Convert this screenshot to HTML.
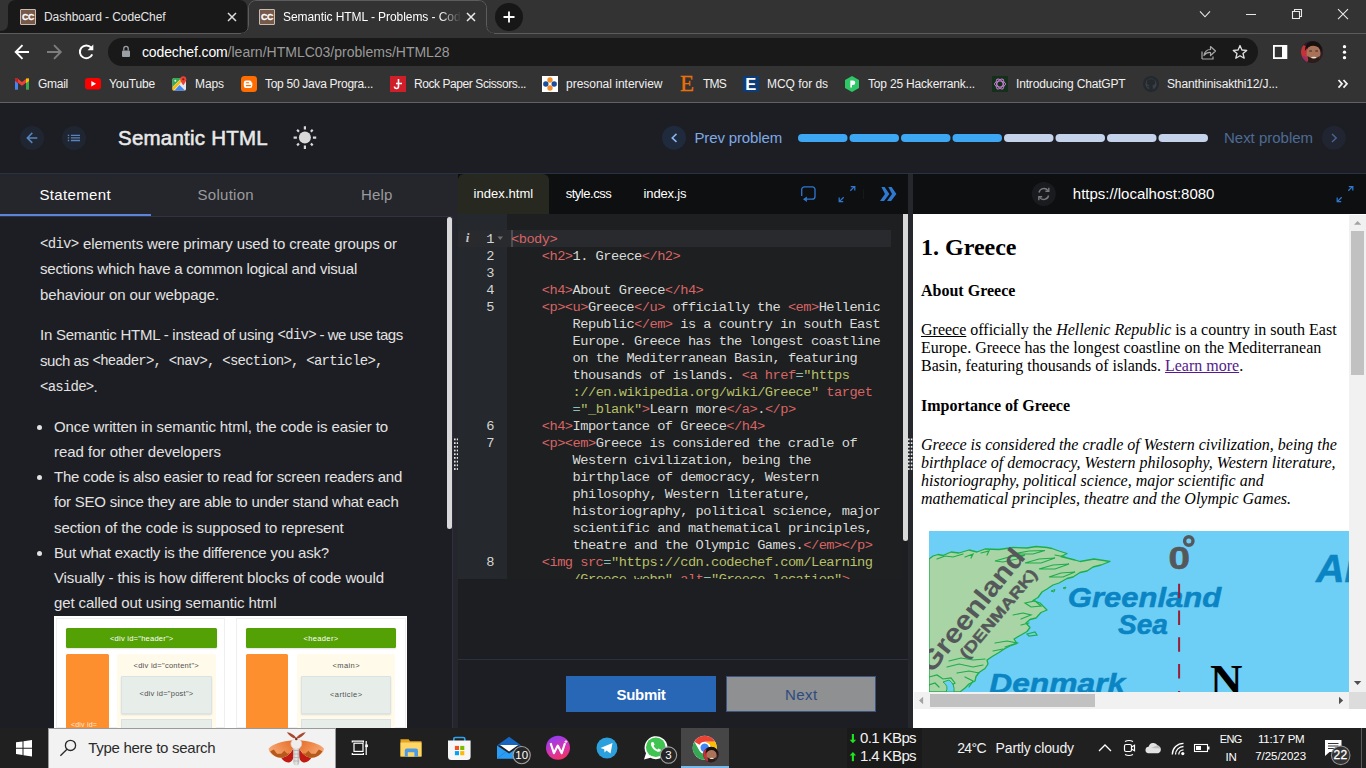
<!DOCTYPE html>
<html lang="en"><head><meta charset="utf-8"><title>Semantic HTML - Problems - CodeChef</title>
<style>
html,body{margin:0;padding:0;background:#1d1e23;overflow:hidden;}
#root{position:relative;width:1366px;height:768px;overflow:hidden;background:#1d1e23;}
#root>div,#root>svg{position:absolute;display:block;}
span.t{position:absolute;white-space:pre;display:block;}

section.code{position:absolute;overflow:hidden;font:13.7px/17px "Liberation Mono",monospace;letter-spacing:-0.524px;color:#d9dbd9;}
section.code i{position:absolute;font-style:normal;white-space:pre;}
section.code b{position:absolute;font-weight:400;right:409px;white-space:pre;color:#d4d6d4;}

section.pv{position:absolute;overflow:hidden;box-sizing:border-box;padding:0 8px;font:16px "Liberation Serif",serif;color:#000;background:#fff;}
section.pv h2{font-size:24px;margin:19.920px 0;font-weight:700;}
section.pv h4{font-size:16px;margin:21.280px 0;font-weight:700;}
section.pv p{margin:16px 0;}
section.pv a{color:#551a8b;text-decoration:underline;}

</style></head>
<body>
<div id="root">
<div style="left:0px;top:0px;width:1366px;height:103px;background:#333333;"></div>
<svg style="left:0;top:0" width="1366" height="36" viewBox="0 0 1366 36">
<path d="M0,33 L0,31 Q8,31 8,23 L8,8 Q8,0 16,0 L239,0 Q247,0 247,8 L247,25 Q247,33 255,33 Z" fill="#191919"/>
<path d="M0,33.5 L240,33.5 Q248.5,33.5 248.5,25 L248.5,9 Q248.5,0.5 257,0.5 L478,0.5 Q486.500,0.5 486.500,9 L486.500,25 Q486.500,33.5 495,33.5 L1366,33.5" fill="none" stroke="#5c5c5c" stroke-width="1"/>
<path d="M241,33 Q249,33 249,25 L249,9 Q249,1 257,1 L478,1 Q486,1 486,9 L486,25 Q486,33 494,33 L494,36 L241,36 Z" fill="#333333"/>
<circle cx="509" cy="17" r="14" fill="#171717"/>
<path d="M503.500,17 H514.500 M509,11.5 V22.5" stroke="#fff" stroke-width="1.800" fill="none"/>
<path d="M228,13 l8,8 m0,-8 l-8,8" stroke="#dedede" stroke-width="1.500" fill="none"/>
<path d="M467,13 l8,8 m0,-8 l-8,8" stroke="#ececec" stroke-width="1.500" fill="none"/>
<path d="M1200,11.400 l5,5.400 l5,-5.400" stroke="#e8e8e8" stroke-width="1.100" fill="none"/>
<path d="M1246,14.500 h10" stroke="#e8e8e8" stroke-width="1" fill="none"/>
<path d="M1292.500,11.500 h7 v7 h-7 z M1294.500,11.500 v-2 h7 v7 h-2" stroke="#e8e8e8" stroke-width="1.100" fill="none"/>
<path d="M1338,9.200 l10,10 m0,-10 l-10,10" stroke="#e8e8e8" stroke-width="1.100" fill="none"/>
</svg>
<svg style="left:20px;top:9px" width="16" height="16" viewBox="0 0 16 16"><rect x="0.5" y="0.5" width="15" height="15" rx="0.5" fill="#77594a" stroke="#cbbcb1" stroke-width="1"/><text x="8.100" y="11.300" font-family="Liberation Sans, sans-serif" font-weight="700" font-size="8.800" fill="#fff" stroke="#fff" stroke-width="0.300" text-anchor="middle" letter-spacing="-0.200">CC</text></svg>
<svg style="left:259px;top:9px" width="16" height="16" viewBox="0 0 16 16"><rect x="0.5" y="0.5" width="15" height="15" rx="0.5" fill="#77594a" stroke="#cbbcb1" stroke-width="1"/><text x="8.100" y="11.300" font-family="Liberation Sans, sans-serif" font-weight="700" font-size="8.800" fill="#fff" stroke="#fff" stroke-width="0.300" text-anchor="middle" letter-spacing="-0.200">CC</text></svg>
<span class="t" style="left:44px;top:9px;font:400 12px/17px 'Liberation Sans', sans-serif;color:#e4e4e4;letter-spacing:-0.095px;">Dashboard - CodeChef</span>
<span class="t" style="left:283px;top:9px;font:400 12px/17px 'Liberation Sans', sans-serif;color:#ffffff;letter-spacing:-0.070px;-webkit-mask-image:linear-gradient(90deg,#000 88%,transparent 100%);mask-image:linear-gradient(90deg,#000 88%,transparent 100%);">Semantic HTML - Problems - Cod</span>
<svg style="left:0;top:36px" width="1366" height="34" viewBox="0 36 1366 34">
<rect x="108" y="38" width="1150" height="28" rx="14" fill="#191919"/>
<path d="M29,52 H16.500 M22.500,45.200 L15.700,52 L22.500,58.800" stroke="#fff" stroke-width="1.900" fill="none"/>
<path d="M47,52 H60 M54,45.200 L60.800,52 L54,58.800" stroke="#7d7d7d" stroke-width="1.900" fill="none"/>
<path d="M91.200,47.700 A6.400,6.400 0 1 0 92.200,54.300" stroke="#fff" stroke-width="2" fill="none"/>
<path d="M93.300,44.500 V50.300 H87.500 Z" fill="#fff"/>
<rect x="122" y="50.500" width="8" height="6.500" rx="1" fill="#9aa0a6"/>
<path d="M123.800,50.500 v-2 a2.200,2.200 0 0 1 4.400,0 v2" stroke="#9aa0a6" stroke-width="1.300" fill="none"/>
<path d="M1202,59 V51.500 M1202,59 H1213 V56.500" stroke="#a8a8a8" stroke-width="1.200" fill="none"/>
<path d="M1204,55.500 Q1205,49.500 1210.500,49.500 V46.500 L1215.500,51 L1210.500,55.500 V52.500 Q1206.500,52.200 1204,55.500 Z" stroke="#a8a8a8" stroke-width="1.200" fill="none" stroke-linejoin="round"/>
<path d="M1240,45.500 L1241.900,50 L1246.700,50.400 L1243,53.500 L1244.200,58.200 L1240,55.700 L1235.800,58.200 L1237,53.500 L1233.300,50.400 L1238.100,50 Z" stroke="#e0e0e0" stroke-width="1.300" fill="none" stroke-linejoin="round"/>
<rect x="1273.900" y="45.900" width="12.500" height="12.200" fill="none" stroke="#fff" stroke-width="1.800"/>
<rect x="1282" y="46" width="4.500" height="12" fill="#fff"/>
<circle cx="1344.500" cy="46.700" r="1.650" fill="#fff"/><circle cx="1344.500" cy="52.200" r="1.650" fill="#fff"/><circle cx="1344.500" cy="57.700" r="1.650" fill="#fff"/>
<defs><clipPath id="avc"><circle cx="1312" cy="52" r="11"/></clipPath></defs>
<g clip-path="url(#avc)"><rect x="1300" y="40" width="24" height="24" fill="#2e1c24"/>
<ellipse cx="1303" cy="55" rx="6" ry="10" fill="#c4323a"/><ellipse cx="1302.500" cy="60.500" rx="5" ry="4.500" fill="#8e2c78" opacity="0.700"/>
<ellipse cx="1313.500" cy="53.500" rx="7" ry="8.700" fill="#a87358"/>
<path d="M1304.800,51 Q1305.500,41 1314,41 Q1322.500,42 1321.800,52 Q1319,45.800 1313.500,45.800 Q1308,45.800 1304.800,51 Z" fill="#17100f"/>
<path d="M1307.300,56 Q1313.500,60.500 1320,56 Q1319.200,63 1313.600,63.400 Q1308.300,63 1307.300,56 Z" fill="#2c1d18"/>
<ellipse cx="1313.800" cy="57.600" rx="2.700" ry="0.900" fill="#eadfd8"/>
<path d="M1309.300,51 h2.600 M1315.300,51 h2.600" stroke="#2a1a14" stroke-width="0.900"/></g>
</svg>
<span class="t" style="left:142px;top:42.2px;font:400 14px/20px 'Liberation Sans', sans-serif;color:#ffffff;letter-spacing:-0.131px;">codechef.com</span>
<span class="t" style="left:227.6px;top:42.2px;font:400 14px/20px 'Liberation Sans', sans-serif;color:#9a9a9a;letter-spacing:0.005px;">/learn/HTMLC03/problems/HTML28</span>
<div style="left:0px;top:102px;width:1366px;height:1px;background:#626262;"></div>
<span class="t" style="left:38px;top:76.1px;font:400 12px/17px 'Liberation Sans', sans-serif;color:#f0f0f0;letter-spacing:-0.269px;">Gmail</span>
<span class="t" style="left:109px;top:76.1px;font:400 12px/17px 'Liberation Sans', sans-serif;color:#f0f0f0;letter-spacing:-0.165px;">YouTube</span>
<span class="t" style="left:195px;top:76.1px;font:400 12px/17px 'Liberation Sans', sans-serif;color:#f0f0f0;letter-spacing:-0.086px;">Maps</span>
<span class="t" style="left:265px;top:76.1px;font:400 12px/17px 'Liberation Sans', sans-serif;color:#f0f0f0;letter-spacing:-0.289px;">Top 50 Java Progra...</span>
<span class="t" style="left:414px;top:76.1px;font:400 12px/17px 'Liberation Sans', sans-serif;color:#f0f0f0;letter-spacing:-0.426px;">Rock Paper Scissors...</span>
<span class="t" style="left:566px;top:76.1px;font:400 12px/17px 'Liberation Sans', sans-serif;color:#f0f0f0;letter-spacing:-0.012px;">presonal interview</span>
<span class="t" style="left:703px;top:76.1px;font:400 12px/17px 'Liberation Sans', sans-serif;color:#f0f0f0;letter-spacing:-0.781px;">TMS</span>
<span class="t" style="left:767px;top:76.1px;font:400 12px/17px 'Liberation Sans', sans-serif;color:#f0f0f0;letter-spacing:-0.034px;">MCQ for ds</span>
<span class="t" style="left:868px;top:76.1px;font:400 12px/17px 'Liberation Sans', sans-serif;color:#f0f0f0;letter-spacing:-0.186px;">Top 25 Hackerrank...</span>
<span class="t" style="left:1016px;top:76.1px;font:400 12px/17px 'Liberation Sans', sans-serif;color:#f0f0f0;letter-spacing:-0.170px;">Introducing ChatGPT</span>
<span class="t" style="left:1167px;top:76.1px;font:400 12px/17px 'Liberation Sans', sans-serif;color:#f0f0f0;letter-spacing:-0.140px;">Shanthinisakthi12/J...</span>
<svg style="left:0;top:72px" width="1366" height="24" viewBox="0 72 1366 24">
<g><path d="M15,78.500 h2.500 l4.500,3.600 l4.500,-3.600 h2.500 v11 h-3 v-6.800 l-4,3.100 l-4,-3.100 v6.800 h-3 z" fill="#ea4335"/>
<path d="M15,79.500 v10 h3 v-7.600 z" fill="#4285f4"/><path d="M29,79.500 v10 h-3 v-7.600 z" fill="#34a853"/><path d="M26,78.500 h3 v2.500 l-3,2.200 z" fill="#fbbc04"/><path d="M18,78.500 h-3 v2.500 l3,2.200 z" fill="#c5221f"/></g>
<rect x="85" y="78" width="16" height="11.500" rx="3" fill="#ff0000"/><path d="M91.300,81 v5.500 l4.800,-2.750 z" fill="#fff"/>
<g><rect x="172.500" y="78" width="13.500" height="12.500" rx="1.500" fill="#e4e6ea"/>
<path d="M172.500,79.500 a1.500,1.500 0 0 1 1.500,-1.500 h7.500 l-9,9 z" fill="#34a853"/>
<path d="M172.500,90 v-2.500 l9.500,-9.500 h3 l-11.500,12.500 z" fill="#fbbc04"/>
<path d="M174.500,90.500 l5,-5.500 l5.500,5.500 z" fill="#4285f4"/>
<circle cx="175.300" cy="80.800" r="1" fill="#e9f5ec"/>
<path d="M183.300,76.300 a3,3 0 0 1 3,3 c0,2.300 -3,6 -3,6 c0,0 -3,-3.700 -3,-6 a3,3 0 0 1 3,-3 z" fill="#ea4335"/><circle cx="183.300" cy="79.300" r="1.100" fill="#8c1a14"/></g>
<rect x="241" y="76" width="16" height="16" rx="3.500" fill="#ff6d00"/>
<path d="M246,80.500 h3.500 a2.200,2.200 0 0 1 2.200,2.200 h0.600 v3 a2.200,2.200 0 0 1 -2.200,2.200 h-4.100 a2.200,2.200 0 0 1 -2.200,-2.200 v-3 a2.200,2.200 0 0 1 2.200,-2.200 z" fill="#fff"/><path d="M246.300,82.800 h2.400 M246.300,85.600 h4.200" stroke="#ff6d00" stroke-width="1.100" stroke-linecap="round"/>
<rect x="390" y="76" width="16" height="16" fill="#d11f2a"/><path d="M398.500,79 v7.500 a2,2 0 0 1 -4,0 M396,83.500 h6" stroke="#fff" stroke-width="1.600" fill="none"/>
<rect x="542" y="76" width="16" height="16" fill="#fff"/><circle cx="550" cy="80" r="2.700" fill="#f28c28"/><circle cx="550" cy="88" r="2.700" fill="#f28c28"/><circle cx="545.800" cy="84" r="2.700" fill="#1b4f9c"/><circle cx="554.200" cy="84" r="2.700" fill="#1b4f9c"/>
<rect x="743" y="76" width="16" height="16" fill="#0b3d7a"/>
<path d="M845,80 l7,-4 l7,4 v8 l-7,4 l-7,-4 z" fill="#2ec866"/><path d="M850.300,80.500 h2.700 a2.300,2.300 0 0 1 0,4.600 h-1 v2.400 h-1.700 z" fill="#fff"/>
<rect x="992" y="76" width="16" height="16" fill="#14301a"/><g stroke="#c47fd0" stroke-width="1" fill="none"><ellipse cx="1000" cy="84" rx="5.500" ry="3"/><ellipse cx="1000" cy="84" rx="5.500" ry="3" transform="rotate(60 1000 84)"/><ellipse cx="1000" cy="84" rx="5.500" ry="3" transform="rotate(120 1000 84)"/></g>
<circle cx="1151" cy="84" r="8" fill="#24292e"/><path d="M1151,78.500 a5.500,5.500 0 0 0 -1.800,10.700 v-2 c-1.600,0.300 -2,-0.800 -2.600,-1.500 c1,0 1.400,0.900 2.600,0.600 l0.500,-0.900 c-1.800,-0.300 -2.900,-1.200 -2.900,-3 c0,-0.800 0.300,-1.400 0.700,-1.900 c-0.100,-0.500 -0.100,-1.200 0.100,-1.600 c0.700,0 1.300,0.300 1.800,0.700 c1,-0.300 2.200,-0.300 3.200,0 c0.500,-0.400 1.100,-0.700 1.800,-0.700 c0.200,0.400 0.200,1.100 0.100,1.600 c0.400,0.500 0.700,1.100 0.700,1.900 c0,1.800 -1.100,2.700 -2.900,3 c0.400,0.400 0.500,0.900 0.500,1.500 v2.300 a5.500,5.500 0 0 0 -1.800,-10.700 z" fill="#3a4047"/>
<path d="M1338.500,80 l3.500,3.800 l-3.500,3.800 M1343.500,80 l3.500,3.800 l-3.500,3.800" stroke="#f4f4f4" stroke-width="1.700" fill="none"/>
</svg>
<span class="t" style="left:680px;top:68.3px;font:400 23px/32px 'Liberation Serif', serif;color:#e8710a;-webkit-text-stroke:0.3px #e8710a;">E</span>
<span class="t" style="left:745.3px;top:72.9px;font:700 16.5px/23px 'Liberation Sans', sans-serif;color:#ffffff;">E</span>
<div style="left:0px;top:103px;width:1366px;height:625px;background:#1d1e23;"></div>
<div style="left:0px;top:173px;width:1366px;height:1px;background:#2a3142;"></div>
<svg style="left:0;top:110px" width="340" height="56" viewBox="0 110 340 56">
<circle cx="32.100" cy="137.900" r="12" fill="#1f2631"/><path d="M37.300,137.900 H27.400 M32.300,132.900 L27.300,137.900 L32.300,142.900" stroke="#5884bd" stroke-width="1.500" fill="none"/>
<circle cx="74" cy="137.900" r="12" fill="#1f2631"/>
<g stroke="#5884bd" stroke-width="1.300"><path d="M70.900,135.400 h9.100 M70.900,137.950 h9.100 M70.900,140.500 h9.100"/><path d="M67.800,135.400 h1.400 M67.800,137.950 h1.400 M67.800,140.500 h1.400"/></g>
<circle cx="304.9" cy="137.6" r="6" fill="#d9d9d9"/>
<path d="M312.90,137.60 L316.20,137.60 M310.84,143.54 L312.68,145.38 M304.90,145.60 L304.90,148.90 M298.96,143.54 L297.12,145.38 M296.90,137.60 L293.60,137.60 M298.96,131.66 L297.12,129.82 M304.90,129.60 L304.90,126.30 M310.84,131.66 L312.68,129.82" stroke="#d9d9d9" stroke-width="2.200" fill="none"/>
</svg>
<span class="t" style="left:118px;top:123px;font:400 20.5px/29px 'Liberation Sans', sans-serif;color:#e9e9e9;letter-spacing:0.233px;-webkit-text-stroke:0.55px #e9e9e9;">Semantic HTML</span>
<svg style="left:650px;top:120px" width="716" height="36" viewBox="650 120 716 36">
<circle cx="674" cy="137.800" r="12" fill="#1f2a3d"/><path d="M676.500,133.900 l-4.300,4 l4.300,4" stroke="#8db6ee" stroke-width="1.500" fill="none"/>
<circle cx="1333.900" cy="137.800" r="12" fill="#202531"/><path d="M1332,134.100 l4.200,3.950 l-4.200,3.950" stroke="#4a6690" stroke-width="1.400" fill="none"/>
<g fill="#3da7f3"><rect x="798" y="134" width="49.500" height="8" rx="4"/><rect x="849.500" y="134" width="49.500" height="8" rx="4"/><rect x="901" y="134" width="49.500" height="8" rx="4"/><rect x="952.500" y="134" width="49.500" height="8" rx="4"/></g>
<g fill="#c4d2ea"><rect x="1004" y="134" width="49.500" height="8" rx="4"/><rect x="1055.500" y="134" width="49.500" height="8" rx="4"/><rect x="1107" y="134" width="49.500" height="8" rx="4"/><rect x="1158.500" y="134" width="49.500" height="8" rx="4"/></g>
</svg>
<span class="t" style="left:694.5px;top:127.1px;font:400 15px/21px 'Liberation Sans', sans-serif;color:#7eaae8;letter-spacing:-0.142px;">Prev problem</span>
<span class="t" style="left:1224px;top:127px;font:400 15px/21px 'Liberation Sans', sans-serif;color:#4d6b95;letter-spacing:-0.017px;">Next problem</span>
<div style="left:0px;top:174px;width:458px;height:42px;background:#25262b;"></div>
<div style="left:0px;top:216px;width:452px;height:1px;background:#2f3342;"></div>
<div style="left:0px;top:214px;width:151px;height:2px;background:#5b84dc;"></div>
<span class="t" style="left:39.5px;top:184px;font:400 15px/21px 'Liberation Sans', sans-serif;color:#ffffff;letter-spacing:0.347px;">Statement</span>
<span class="t" style="left:197.5px;top:184px;font:400 15px/21px 'Liberation Sans', sans-serif;color:#9a9b9e;letter-spacing:0.285px;">Solution</span>
<span class="t" style="left:361px;top:184px;font:400 15px/21px 'Liberation Sans', sans-serif;color:#9a9b9e;letter-spacing:0.160px;">Help</span>
<div style="left:452px;top:216px;width:6px;height:512px;background:#25262b;"></div>
<div style="left:452px;top:217px;width:1px;height:511px;background:#2d3040;"></div>
<div style="left:447px;top:217px;width:5px;height:311.5px;background:#d9d9d9;border-radius:3px;"></div>
<svg style="left:453.5px;top:438px" width="5" height="34" viewBox="0 0 5 34"><rect x="0" y="0.5" width="1.600" height="1.800" fill="#e8e8e8"/><rect x="2.800" y="0.5" width="1.600" height="1.800" fill="#e8e8e8"/><rect x="0" y="4.2" width="1.600" height="1.800" fill="#e8e8e8"/><rect x="2.800" y="4.2" width="1.600" height="1.800" fill="#e8e8e8"/><rect x="0" y="7.9" width="1.600" height="1.800" fill="#e8e8e8"/><rect x="2.800" y="7.9" width="1.600" height="1.800" fill="#e8e8e8"/><rect x="0" y="11.6" width="1.600" height="1.800" fill="#e8e8e8"/><rect x="2.800" y="11.6" width="1.600" height="1.800" fill="#e8e8e8"/><rect x="0" y="15.3" width="1.600" height="1.800" fill="#e8e8e8"/><rect x="2.800" y="15.3" width="1.600" height="1.800" fill="#e8e8e8"/><rect x="0" y="19.0" width="1.600" height="1.800" fill="#e8e8e8"/><rect x="2.800" y="19.0" width="1.600" height="1.800" fill="#e8e8e8"/><rect x="0" y="22.7" width="1.600" height="1.800" fill="#e8e8e8"/><rect x="2.800" y="22.7" width="1.600" height="1.800" fill="#e8e8e8"/><rect x="0" y="26.4" width="1.600" height="1.800" fill="#e8e8e8"/><rect x="2.800" y="26.4" width="1.600" height="1.800" fill="#e8e8e8"/><rect x="0" y="30.1" width="1.600" height="1.800" fill="#e8e8e8"/><rect x="2.800" y="30.1" width="1.600" height="1.800" fill="#e8e8e8"/></svg>
<span class="t" style="left:40px;top:234.3px;font:400 14px/20px 'Liberation Mono', monospace;color:#e2e2e2;letter-spacing:-0.703px;">&lt;div&gt;</span>
<span class="t" style="left:83px;top:232.6px;font:400 15px/21px 'Liberation Sans', sans-serif;color:#e2e2e2;letter-spacing:-0.102px;">elements were primary used to create groups or</span>
<span class="t" style="left:40px;top:258.1px;font:400 15px/21px 'Liberation Sans', sans-serif;color:#e2e2e2;letter-spacing:-0.209px;">sections which have a common logical and visual</span>
<span class="t" style="left:40px;top:283.6px;font:400 15px/21px 'Liberation Sans', sans-serif;color:#e2e2e2;letter-spacing:-0.113px;">behaviour on our webpage.</span>
<span class="t" style="left:40px;top:323.6px;font:400 15px/21px 'Liberation Sans', sans-serif;color:#e2e2e2;letter-spacing:-0.245px;">In Semantic HTML - instead of using</span>
<span class="t" style="left:277.5px;top:325.3px;font:400 14px/20px 'Liberation Mono', monospace;color:#e2e2e2;letter-spacing:-0.703px;">&lt;div&gt;</span>
<span class="t" style="left:319.5px;top:323.6px;font:400 15px/21px 'Liberation Sans', sans-serif;color:#e2e2e2;letter-spacing:-0.463px;">- we use tags</span>
<span class="t" style="left:40px;top:349.6px;font:400 15px/21px 'Liberation Sans', sans-serif;color:#e2e2e2;letter-spacing:-0.458px;">such as</span>
<span class="t" style="left:92.5px;top:351.3px;font:400 14px/20px 'Liberation Mono', monospace;color:#e2e2e2;letter-spacing:-0.765px;">&lt;header&gt;, &lt;nav&gt;, &lt;section&gt;, &lt;article&gt;,</span>
<span class="t" style="left:40px;top:377.3px;font:400 14px/20px 'Liberation Mono', monospace;color:#e2e2e2;letter-spacing:-0.759px;">&lt;aside&gt;</span>
<span class="t" style="left:93.5px;top:375.6px;font:400 15px/21px 'Liberation Sans', sans-serif;color:#e2e2e2;letter-spacing:-0.672px;">.</span>
<div style="left:37px;top:424.5px;width:5px;height:5px;background:#e2e2e2;border-radius:50%;"></div>
<div style="left:37px;top:475.0px;width:5px;height:5px;background:#e2e2e2;border-radius:50%;"></div>
<div style="left:37px;top:550.5px;width:5px;height:5px;background:#e2e2e2;border-radius:50%;"></div>
<span class="t" style="left:54px;top:415.6px;font:400 15px/21px 'Liberation Sans', sans-serif;color:#e2e2e2;letter-spacing:-0.102px;">Once written in semantic html, the code is easier to</span>
<span class="t" style="left:54px;top:440.6px;font:400 15px/21px 'Liberation Sans', sans-serif;color:#e2e2e2;letter-spacing:-0.024px;">read for other developers</span>
<span class="t" style="left:54px;top:466.1px;font:400 15px/21px 'Liberation Sans', sans-serif;color:#e2e2e2;letter-spacing:-0.226px;">The code is also easier to read for screen readers and</span>
<span class="t" style="left:54px;top:491.4px;font:400 15px/21px 'Liberation Sans', sans-serif;color:#e2e2e2;letter-spacing:-0.222px;">for SEO since they are able to under stand what each</span>
<span class="t" style="left:54px;top:516.6px;font:400 15px/21px 'Liberation Sans', sans-serif;color:#e2e2e2;letter-spacing:-0.108px;">section of the code is supposed to represent</span>
<span class="t" style="left:54px;top:541.6px;font:400 15px/21px 'Liberation Sans', sans-serif;color:#e2e2e2;letter-spacing:-0.191px;">But what exactly is the difference you ask?</span>
<span class="t" style="left:54px;top:566.6px;font:400 15px/21px 'Liberation Sans', sans-serif;color:#e2e2e2;letter-spacing:-0.119px;">Visually - this is how different blocks of code would</span>
<span class="t" style="left:54px;top:591.6px;font:400 15px/21px 'Liberation Sans', sans-serif;color:#e2e2e2;letter-spacing:-0.102px;">get called out using semantic html</span>
<div style="left:54px;top:616px;width:353px;height:112px;background:#ffffff;"></div>
<div style="left:56px;top:618px;width:169px;height:110px;background:#ffffff;border:1px solid #efefef;box-sizing:border-box;"></div>
<div style="left:236px;top:618px;width:170px;height:110px;background:#ffffff;border:1px solid #efefef;box-sizing:border-box;"></div>
<div style="left:66px;top:628px;width:150.5px;height:19.5px;background:#54a106;border-radius:1.5px;box-shadow:0 1px 2px rgba(0,0,0,.12);"></div>
<div style="left:66px;top:654px;width:42.5px;height:74px;background:#fd8f2e;border-radius:1.5px 1.5px 0 0;"></div>
<div style="left:117px;top:654px;width:98.5px;height:74px;background:#fffaea;border-radius:1.5px 1.5px 0 0;"></div>
<div style="left:121px;top:676px;width:90.5px;height:37.5px;background:#e7eeea;border-radius:1px;border:1px solid #d9e2e4;box-sizing:border-box;box-shadow:0 1px 2px rgba(0,0,0,.12);"></div>
<div style="left:121px;top:719px;width:90.5px;height:9px;background:#e7eeea;border-radius:1px 1px 0 0;border:1px solid #d9e2e4;border-bottom:none;box-sizing:border-box;"></div>
<div style="left:245.5px;top:628px;width:150.5px;height:19.5px;background:#54a106;border-radius:1.5px;box-shadow:0 1px 2px rgba(0,0,0,.12);"></div>
<div style="left:245.5px;top:654px;width:42.5px;height:74px;background:#fd8f2e;border-radius:1.5px 1.5px 0 0;"></div>
<div style="left:296.5px;top:654px;width:98.5px;height:74px;background:#fffaea;border-radius:1.5px 1.5px 0 0;"></div>
<div style="left:300.5px;top:676px;width:90.5px;height:37.5px;background:#e7eeea;border-radius:1px;border:1px solid #d9e2e4;box-sizing:border-box;box-shadow:0 1px 2px rgba(0,0,0,.12);"></div>
<div style="left:300.5px;top:719px;width:90.5px;height:9px;background:#e7eeea;border-radius:1px 1px 0 0;border:1px solid #d9e2e4;border-bottom:none;box-sizing:border-box;"></div>
<span class="t" style="left:110px;top:633.5px;font:400 7.5px/10px 'Liberation Sans', sans-serif;color:#ffffff;letter-spacing:0.245px;">&lt;div id=&quot;header&quot;&gt;</span>
<span class="t" style="left:303.5px;top:633.5px;font:400 7.5px/10px 'Liberation Sans', sans-serif;color:#ffffff;letter-spacing:0.359px;">&lt;header&gt;</span>
<span class="t" style="left:133.5px;top:660.8px;font:400 7.5px/10px 'Liberation Sans', sans-serif;color:#505050;letter-spacing:0.273px;">&lt;div id=&quot;content&quot;&gt;</span>
<span class="t" style="left:332.5px;top:660.8px;font:400 7.5px/10px 'Liberation Sans', sans-serif;color:#505050;letter-spacing:0.411px;">&lt;main&gt;</span>
<span class="t" style="left:139.5px;top:689px;font:400 7.5px/10px 'Liberation Sans', sans-serif;color:#505050;letter-spacing:0.256px;">&lt;div id=&quot;post&quot;&gt;</span>
<span class="t" style="left:330px;top:689.5px;font:400 7.5px/10px 'Liberation Sans', sans-serif;color:#505050;letter-spacing:0.413px;">&lt;article&gt;</span>
<span class="t" style="left:71px;top:720px;font:400 7px/10px 'Liberation Sans', sans-serif;color:#ffe9d6;letter-spacing:0.184px;">&lt;div id=</span>
<div style="left:458px;top:174px;width:450px;height:40px;background:#0e0f11;"></div>
<div style="left:458px;top:174px;width:91px;height:40px;background:#27281f;border-radius:6px 6px 0 0;"></div>
<span class="t" style="left:473.6px;top:184.8px;font:400 13px/18px 'Liberation Sans', sans-serif;color:#ffffff;letter-spacing:0.045px;">index.html</span>
<span class="t" style="left:565.7px;top:184.8px;font:400 13px/18px 'Liberation Sans', sans-serif;color:#ffffff;letter-spacing:-0.483px;">style.css</span>
<span class="t" style="left:643.6px;top:184.8px;font:400 13px/18px 'Liberation Sans', sans-serif;color:#ffffff;letter-spacing:-0.160px;">index.js</span>
<svg style="left:790px;top:178px" width="118" height="32" viewBox="790 178 118 32">
<path d="M806.700,199.200 H812.300 a2.700,2.700 0 0 0 2.700,-2.700 V189.500 a2.700,2.700 0 0 0 -2.700,-2.700 H804.400 a2.700,2.700 0 0 0 -2.700,2.700 V196" stroke="#2e78d2" stroke-width="1.300" fill="none"/>
<path d="M803,199.200 L806.900,196.400 V202 Z" fill="#2e78d2"/>
<path d="M850.300,190.800 L854.700,186.400 M850.800,186.500 H854.800 V190.500 M843.700,197.200 L839.300,201.600 M839.200,197.500 V201.500 H843.200" stroke="#2e78d2" stroke-width="1.250" fill="none"/>
<path d="M863.500,189 v10" stroke="#141820" stroke-width="1"/>
<path d="M881.400,187 H884.600 L889.400,194 L884.100,201 H880 L885,194 Z M888.300,187 H891.600 L896.400,194 L891.100,201 H887 L892,194 Z" fill="#2e78d2"/>
</svg>
<div style="left:458px;top:214px;width:450px;height:445px;background:#1d1e22;"></div>
<div style="left:458px;top:214px;width:445px;height:365px;background:#1d1f21;"></div>
<div style="left:458px;top:214px;width:49px;height:365px;background:#25282c;"></div>
<div style="left:507px;top:230px;width:384px;height:17px;background:#282a2e;"></div>
<div style="left:458px;top:230px;width:49px;height:17px;background:#282a2e;"></div>
<div style="left:511px;top:230px;width:2px;height:17px;background:#4c4e52;"></div>
<div style="left:903px;top:214px;width:5px;height:327.3px;background:#d9d9d9;border-radius:0 0 3px 3px;"></div>
<section class="code" style="left:458px;top:214px;width:445px;height:365px;"><b style="top:17.1px">1</b><i style="left:53.00px;top:17.1px"><span style="color:#d86464">&lt;body&gt;</span></i><b style="top:34.1px">2</b><i style="left:83.79px;top:34.1px"><span style="color:#d86464">&lt;h2&gt;</span>1. Greece<span style="color:#d86464">&lt;/h2&gt;</span></i><b style="top:51.1px">3</b><b style="top:68.1px">4</b><i style="left:83.79px;top:68.1px"><span style="color:#d86464">&lt;h4&gt;</span>About Greece<span style="color:#d86464">&lt;/h4&gt;</span></i><b style="top:85.1px">5</b><i style="left:83.79px;top:85.1px"><span style="color:#d86464">&lt;p&gt;&lt;u&gt;</span>Greece<span style="color:#d86464">&lt;/u&gt;</span> officially the <span style="color:#d86464">&lt;em&gt;</span>Hellenic</i><i style="left:114.58px;top:102.1px">Republic<span style="color:#d86464">&lt;/em&gt;</span> is a country in south East</i><i style="left:114.58px;top:119.1px">Europe. Greece has the longest coastline</i><i style="left:114.58px;top:136.1px">on the Mediterranean Basin, featuring</i><i style="left:114.58px;top:153.1px">thousands of islands. <span style="color:#d86464">&lt;a href</span><span style="color:#8abeb7">=</span><span style="color:#b8c068">&quot;https</span></i><i style="left:114.58px;top:170.1px"><span style="color:#b8c068">://en.wikipedia.org/wiki/Greece&quot;</span> <span style="color:#d86464">target</span></i><i style="left:114.58px;top:187.1px"><span style="color:#8abeb7">=</span><span style="color:#b8c068">&quot;_blank&quot;</span><span style="color:#d86464">&gt;</span>Learn more<span style="color:#d86464">&lt;/a&gt;</span>.<span style="color:#d86464">&lt;/p&gt;</span></i><b style="top:204.1px">6</b><i style="left:83.79px;top:204.1px"><span style="color:#d86464">&lt;h4&gt;</span>Importance of Greece<span style="color:#d86464">&lt;/h4&gt;</span></i><b style="top:221.1px">7</b><i style="left:83.79px;top:221.1px"><span style="color:#d86464">&lt;p&gt;&lt;em&gt;</span>Greece is considered the cradle of</i><i style="left:114.58px;top:238.1px">Western civilization, being the</i><i style="left:114.58px;top:255.1px">birthplace of democracy, Western</i><i style="left:114.58px;top:272.1px">philosophy, Western literature,</i><i style="left:114.58px;top:289.1px">historiography, political science, major</i><i style="left:114.58px;top:306.1px">scientific and mathematical principles,</i><i style="left:114.58px;top:323.1px">theatre and the Olympic Games.<span style="color:#d86464">&lt;/em&gt;&lt;/p&gt;</span></i><b style="top:340.1px">8</b><i style="left:83.79px;top:340.1px"><span style="color:#d86464">&lt;img src</span><span style="color:#8abeb7">=</span><span style="color:#b8c068">&quot;https://cdn.codechef.com/Learning</span></i><i style="left:114.58px;top:357.1px"><span style="color:#b8c068">/Greece.webp&quot;</span> <span style="color:#d86464">alt</span><span style="color:#8abeb7">=</span><span style="color:#b8c068">&quot;Greece location&quot;</span><span style="color:#d86464">&gt;</span></i></section>
<span class="t" style="left:465.8px;top:229.2px;font:700 13px/18px 'Liberation Serif', serif;color:#c4c4c4;font-style:italic;">i</span>
<svg style="left:497px;top:236px" width="7" height="5" viewBox="0 0 7 5"><path d="M0.500,0.500 h5.500 l-2.750,3.500 z" fill="#6c6e70"/></svg>
<div style="left:458px;top:659px;width:450px;height:1px;background:#2c3040;"></div>
<div style="left:566px;top:676px;width:150px;height:36px;background:#2866b6;"></div>
<span class="t" style="left:616.5px;top:683.5px;font:700 15px/21px 'Liberation Sans', sans-serif;color:#ffffff;letter-spacing:-0.307px;">Submit</span>
<div style="left:726px;top:676px;width:150px;height:36px;background:#8e9091;border:1px solid #3a5584;box-sizing:border-box;"></div>
<span class="t" style="left:785px;top:683.5px;font:400 15px/21px 'Liberation Sans', sans-serif;color:#2d4b80;letter-spacing:0.414px;">Next</span>
<div style="left:908px;top:174px;width:5px;height:554px;background:#26272c;"></div>
<svg style="left:908.3px;top:438px" width="5" height="34" viewBox="0 0 5 34"><rect x="0" y="0.5" width="1.600" height="1.800" fill="#e8e8e8"/><rect x="2.800" y="0.5" width="1.600" height="1.800" fill="#e8e8e8"/><rect x="0" y="4.2" width="1.600" height="1.800" fill="#e8e8e8"/><rect x="2.800" y="4.2" width="1.600" height="1.800" fill="#e8e8e8"/><rect x="0" y="7.9" width="1.600" height="1.800" fill="#e8e8e8"/><rect x="2.800" y="7.9" width="1.600" height="1.800" fill="#e8e8e8"/><rect x="0" y="11.6" width="1.600" height="1.800" fill="#e8e8e8"/><rect x="2.800" y="11.6" width="1.600" height="1.800" fill="#e8e8e8"/><rect x="0" y="15.3" width="1.600" height="1.800" fill="#e8e8e8"/><rect x="2.800" y="15.3" width="1.600" height="1.800" fill="#e8e8e8"/><rect x="0" y="19.0" width="1.600" height="1.800" fill="#e8e8e8"/><rect x="2.800" y="19.0" width="1.600" height="1.800" fill="#e8e8e8"/><rect x="0" y="22.7" width="1.600" height="1.800" fill="#e8e8e8"/><rect x="2.800" y="22.7" width="1.600" height="1.800" fill="#e8e8e8"/><rect x="0" y="26.4" width="1.600" height="1.800" fill="#e8e8e8"/><rect x="2.800" y="26.4" width="1.600" height="1.800" fill="#e8e8e8"/><rect x="0" y="30.1" width="1.600" height="1.800" fill="#e8e8e8"/><rect x="2.800" y="30.1" width="1.600" height="1.800" fill="#e8e8e8"/></svg>
<div style="left:913px;top:174px;width:453px;height:40px;background:#0e0f11;"></div>
<div style="left:913px;top:214px;width:453px;height:514px;background:#ffffff;"></div>
<svg style="left:1028px;top:178px" width="338" height="32" viewBox="1028 178 338 32">
<circle cx="1043.800" cy="194" r="12" fill="#1a1b1e"/>
<path d="M1039,192.500 a5,5 0 0 1 9,-1.800 M1048.600,195.500 a5,5 0 0 1 -9,1.800" stroke="#77797c" stroke-width="1.400" fill="none"/>
<path d="M1048.800,187.800 v3.400 h-3.400 M1038.800,200.200 v-3.400 h3.400" stroke="#77797c" stroke-width="1.400" fill="none"/>
<path d="M1348.300,190.800 L1352.700,186.400 M1348.800,186.500 H1352.800 V190.500 M1341.700,197.200 L1337.300,201.600 M1337.200,197.500 V201.500 H1341.200" stroke="#2e78d2" stroke-width="1.250" fill="none"/>
</svg>
<span class="t" style="left:1072.8px;top:183.3px;font:400 15px/21px 'Liberation Sans', sans-serif;color:#ffffff;letter-spacing:-0.008px;">https://localhost:8080</span>
<section class="pv" style="left:913px;top:214px;width:436px;height:478px;">
<h2>1. Greece</h2>
<h4>About Greece</h4>
<p><u>Greece</u> officially the <em>Hellenic Republic</em> is a country in south East Europe. Greece has the longest coastline on the Mediterranean Basin, featuring thousands of islands. <a>Learn more</a>.</p>
<h4>Importance of Greece</h4>
<p><em>Greece is considered the cradle of Western civilization, being the birthplace of democracy, Western philosophy, Western literature, historiography, political science, major scientific and mathematical principles, theatre and the Olympic Games.</em></p>
</section>
<svg style="left:929px;top:531px" width="420" height="161" viewBox="0 0 420 161">
<rect width="420" height="161" fill="#6ecff6"/>
<path d="M0,28 L4,25 L9,23.500 L14,24.500 L22,21 L30,22 L40,19 L48,21 L56,18 L70,18.500 L84,16.500 L98,17 L107,15.500 L118,16.500 L123,17.500 L130,20 L138,22.500 L132,25.500 L146,29 L151,30.500 L165,28 L181,30.500 L172,34 L164,36 L158,40 L151,41.500 L144,46 L138,47.500 L130,52 L124,54 L118,58 L113,61 L109,66.500 L104,69.500 L111,72 L118,79 L112,81.500 L107,87 L101,88.500 L97,92 L101,96.500 L98,100.500 L92,104 L85,108 L88,112.500 L81,115 L76,117.500 L70,121.500 L64,125 L58,129 L59,133 L56,137.500 L50,141.500 L47,145.500 L46,150 L40,153 L36,157 L31,161 L0,161 Z" fill="#a9d4a5" stroke="#1cae4b" stroke-width="1.300" stroke-linejoin="round"/>
<g fill="none" stroke="#1cae4b" stroke-width="1.200" stroke-linecap="round">
<path d="M8,28 L16,25 L24,26 L34,23"/><path d="M36,26 L44,23 L42,27"/><path d="M52,22 L60,20 L58,24"/>
<path d="M66,30 L80,26 L96,24 L88,28 L74,31 Z"/><path d="M84,23 L100,20 L116,19.500 L104,23 Z"/><path d="M96,32 L110,28 L126,27 L112,32 Z"/>
<path d="M110,38 L124,34 L140,33 L126,38 Z"/><path d="M120,46 L132,42 L146,41 L134,46 Z"/><path d="M126,24 L136,26"/>
<path d="M96,72 L106,70 L112,75 L102,76 Z"/><path d="M84,84 L94,82 L102,84 L92,88"/><path d="M92,94 L100,92"/><path d="M98,103 L106,101 L108,104 L100,105 Z"/>
<path d="M66,112 L78,110 L88,112 L76,116"/><path d="M64,120 L74,118"/>
<path d="M20,130 L32,127 L44,129 L56,128"/><path d="M18,136 L30,133 L44,136 L54,134"/><path d="M28,142 L40,140 L50,142"/><path d="M36,146 L44,150 L40,156"/>
<path d="M0,146 L8,144 L14,148 L22,147 L26,152 L20,156 L24,161"/><path d="M0,154 L6,152 L10,156"/>
</g>
<path d="M122,60 l4,-1.500 l-1,2.500 z M134,57 l3,-1 l-1,2 z" fill="#a9d4a5" stroke="#1cae4b" stroke-width="1"/>
<path d="M20,149 Q26,153 25,161 L17,161 Q20,155 14,151 Z" fill="#6ecff6" stroke="#1cae4b" stroke-width="1"/>
<g font-family="Liberation Sans, sans-serif" font-weight="700">
<text transform="translate(3,143) rotate(-51)" font-size="27" fill="#55585a" textLength="150" lengthAdjust="spacingAndGlyphs">Greenland</text>
<text transform="translate(37.800,128.700) rotate(-50)" font-size="15.500" fill="#55585a" stroke="#55585a" stroke-width="0.400" textLength="111" lengthAdjust="spacingAndGlyphs">(DENMARK)</text>
<text x="138.800" y="75.500" font-size="27.500" font-style="italic" fill="#0a84c3" stroke="#0a84c3" stroke-width="0.500" textLength="153.300" lengthAdjust="spacingAndGlyphs">Greenland</text>
<text x="189" y="103" font-size="27.500" font-style="italic" fill="#0a84c3" stroke="#0a84c3" stroke-width="0.500" textLength="50" lengthAdjust="spacingAndGlyphs">Sea</text>
<text x="60.200" y="162" font-size="27.500" font-style="italic" fill="#0a84c3" stroke="#0a84c3" stroke-width="0.500" textLength="136" lengthAdjust="spacingAndGlyphs">Denmark</text>
<text x="387" y="51.100" font-size="39.500" font-style="italic" fill="#0a84c3" stroke="#0a84c3" stroke-width="0.500" textLength="44" lengthAdjust="spacingAndGlyphs">Ar</text>
<text x="239.500" y="38.300" font-size="32" fill="#55585a" stroke="#55585a" stroke-width="0.600" textLength="21.500" lengthAdjust="spacingAndGlyphs">0</text>
</g>
<circle cx="259.800" cy="10" r="4.200" fill="none" stroke="#55585a" stroke-width="3.400"/>
<path d="M250.100,52.700 V161" stroke="#9c1d35" stroke-width="2" stroke-dasharray="14.500 12.300" fill="none"/>
<text x="281" y="163.600" font-family="Liberation Serif, serif" font-weight="700" font-size="45" fill="#000">N</text>
</svg>
<div style="left:1349px;top:215px;width:17px;height:477px;background:#f1f1f1;"></div>
<div style="left:1351px;top:231px;width:13px;height:144px;background:#c1c1c1;"></div>
<div style="left:914px;top:692px;width:435px;height:17px;background:#f1f1f1;"></div>
<div style="left:1349px;top:692px;width:17px;height:17px;background:#dcdcdc;"></div>
<div style="left:930px;top:694px;width:165px;height:13px;background:#c1c1c1;"></div>
<svg style="left:913px;top:214px" width="453" height="495" viewBox="913 214 453 495">
<path d="M1354,224.800 h7.200 l-3.600,-3.900 z" fill="#a3a3a3"/><path d="M1353.900,681 h7.400 l-3.700,4.100 z" fill="#505050"/>
<path d="M923.100,696.800 v7.400 l-4.100,-3.700 z" fill="#a3a3a3"/><path d="M1339,696.800 v7.400 l4.100,-3.700 z" fill="#505050"/>
</svg>
<div style="left:0px;top:728px;width:1366px;height:40px;background:#202020;"></div>
<div style="left:48px;top:728px;width:288px;height:40px;background:#f2f2f2;border:1px solid #9a9a9a;border-bottom:none;box-sizing:border-box;"></div>
<div style="left:681px;top:728px;width:48px;height:40px;background:#464646;"></div>
<div style="left:681px;top:766px;width:48px;height:2px;background:#76b9ed;"></div>
<div style="left:847px;top:728px;width:75px;height:40px;background:#1a1a1a;"></div>
<div style="left:1361px;top:728px;width:1px;height:40px;background:#5a5a5a;"></div>
<svg style="left:0;top:728px" width="1366" height="40" viewBox="0 728 1366 40">
<path d="M16,742.300 l6.500,-0.900 v6.300 h-6.500 z M23.500,741.200 l8.500,-1.200 v7.700 h-8.500 z M16,748.700 h6.500 v6.300 l-6.500,-0.900 z M23.500,748.700 h8.500 v7.700 l-8.500,-1.200 z" fill="#fff"/>
<circle cx="70.500" cy="745.400" r="5.100" stroke="#2a2a2a" stroke-width="1.300" fill="none"/><path d="M67,749.200 L60.400,755.800" stroke="#2a2a2a" stroke-width="1.300"/>
<!-- moth -->
<defs><linearGradient id="mw1" x1="1" y1="0" x2="0" y2="0.600"><stop offset="0" stop-color="#e56a22"/><stop offset="1" stop-color="#f7ab78"/></linearGradient>
<linearGradient id="mw2" x1="0" y1="0" x2="1" y2="0.600"><stop offset="0" stop-color="#e56a22"/><stop offset="1" stop-color="#f7ab78"/></linearGradient>
<linearGradient id="mb" x1="0" y1="0" x2="1" y2="0"><stop offset="0" stop-color="#c4c4c4"/><stop offset="0.500" stop-color="#e6e6e6"/><stop offset="1" stop-color="#b4b4b4"/></linearGradient></defs>
<g>
<path d="M281,757.600 C283,761 286,763 289.200,762.400 C292,761.600 293.600,759 293.600,755 L293.600,748 C291,753 287,757.200 281,757.600 Z" fill="#c01a12"/><path d="M311.60,757.600 C309.60,761 306.60,763 303.40,762.400 C300.60,761.600 299.00,759 299.00,755 L299.00,748 C301.60,753 305.60,757.200 311.60,757.600 Z" fill="#c01a12"/>
<path d="M292.500,740.300 C283,741 272,744.500 268.700,748.500 C268.300,752 274,757.500 281,757.800 C287,757.500 291.500,752.500 293.800,747 Z" fill="url(#mw1)"/><path d="M300.10,740.300 C309.60,741 320.60,744.500 323.90,748.500 C324.30,752 318.60,757.500 311.60,757.800 C305.60,757.500 301.10,752.500 298.80,747 Z" fill="url(#mw2)"/>
<path d="M270.300,751.200 L273.800,749.600 L277,753.800 L281.300,753.800 L284.300,750.800 L287.300,753.800 L290,752.700 C287.500,756 284,757.800 281,757.800 C276,757.500 272,754.500 270.300,751.200 Z" fill="#b55a1b"/><path d="M322.30,751.200 L318.80,749.600 L315.60,753.800 L311.30,753.800 L308.30,750.800 L305.30,753.800 L302.60,752.700 C305.10,756 308.60,757.800 311.60,757.800 C316.60,757.500 320.60,754.500 322.30,751.200 Z" fill="#b55a1b"/>
<path d="M295.700,738.800 C292.500,738 289,735.500 286.800,732.200 C290.500,732.500 294.500,735 296.600,738.300 Z" fill="#a8482f"/><path d="M296.90,738.800 C300.10,738 303.60,735.500 305.80,732.200 C302.10,732.500 298.10,735 296.00,738.300 Z" fill="#a8482f"/>
<path d="M293.300,746 h6 v15.500 a3,4 0 0 1 -6,0 z" fill="url(#mb)"/>
<path d="M293.300,750.500 h6 M293.300,754 h6 M293.300,757.500 h6 M293.500,761 h5.600" stroke="#a9a9a9" stroke-width="0.700"/>
<circle cx="296.300" cy="743.700" r="5.400" fill="#f0eeed" stroke="#d9d2d0" stroke-width="0.700"/><circle cx="296.300" cy="739" r="1.300" fill="#8c2a1f"/>
</g>
<!-- task view -->
<g stroke="#fff" stroke-width="1.200" fill="none"><rect x="354" y="743.200" width="9" height="8.200"/><path d="M352.200,741.200 h11.300 M352.200,754.300 h11.300 M352.300,740.600 v1.800 M363.400,740.600 v1.800 M352.300,753.100 v1.800 M363.400,753.100 v1.800 M366.200,741 v14"/></g>
<rect x="365.300" y="744.500" width="2.600" height="2.600" fill="#fff"/>
<!-- explorer -->
<path d="M400.500,739.300 h8.200 l1.300,1.900 h11.500 v15.300 h-21 z" fill="#e8a51e"/><path d="M400.500,742.500 h21 v14 h-21 z" fill="#fdd667"/>
<path d="M404.800,756.500 v-6 a2,2 0 0 1 2,-2 h9.200 a2,2 0 0 1 2,2 v6 z" fill="#4a9ae6"/><path d="M407.800,756.500 v-4.300 h6.600 v4.300 z" fill="#fdd667"/>
<!-- store -->
<path d="M453.800,742 v-3 a1.500,1.500 0 0 1 1.500,-1.500 h8 a1.500,1.500 0 0 1 1.500,1.500 v3" stroke="#2ea3ec" stroke-width="1.700" fill="none"/>
<path d="M448,740.500 h22.600 v16 a3.500,3.500 0 0 1 -3.500,3.500 h-15.600 a3.500,3.500 0 0 1 -3.500,-3.500 z" fill="#f6f6f6"/>
<rect x="454.900" y="745.900" width="4.100" height="4.100" fill="#f25022"/><rect x="460.200" y="745.900" width="4.100" height="4.100" fill="#7fba00"/><rect x="454.900" y="751.100" width="4.100" height="4.100" fill="#00a4ef"/><rect x="460.200" y="751.100" width="4.100" height="4.100" fill="#ffb900"/>
<!-- mail -->
<path d="M497,745.600 l12.100,-8.800 l12.100,8.800 z" fill="#1666c0"/>
<path d="M500,745 h18.200 l-9.100,6.600 z" fill="#ffffff"/>
<path d="M497,745.600 l12.100,8 l12.100,-8 v13.100 h-24.200 z" fill="#2b9df4"/>
<path d="M497,758.700 l9,-7 M521.200,758.700 l-9,-7" stroke="#1c86dd" stroke-width="0.800"/>
<circle cx="521.700" cy="755.100" r="8.600" fill="#262626" stroke="#a0a0a0" stroke-width="1.100"/>
<!-- wps -->
<defs><linearGradient id="wps" x1="0.300" y1="0" x2="0.700" y2="1"><stop offset="0" stop-color="#8f3df2"/><stop offset="0.550" stop-color="#d534b4"/><stop offset="1" stop-color="#f4325a"/></linearGradient></defs>
<circle cx="558" cy="747.800" r="12" fill="url(#wps)"/>
<path d="M550.600,743.200 l3.300,10 l3.900,-7.600 l3.900,7.600 l3.300,-10" stroke="#fff" stroke-width="2.100" fill="none" stroke-linejoin="round"/><path d="M566,740.200 v3 M564.500,741.700 h3" stroke="#fff" stroke-width="0.900"/>
<!-- telegram -->
<circle cx="607" cy="748" r="10.500" fill="#2ba0dc"/><path d="M600.500,748 l12,-5 l-2,10.500 l-4,-3 l-2,2 l-0.300,-3.200 z" fill="#fff"/>
<!-- whatsapp -->
<path d="M644,759.600 l2,-6.300 a11.500,11.500 0 1 1 4.400,4.400 z" fill="#fff"/><circle cx="655.800" cy="747.300" r="9.800" fill="#3fc351"/>
<path d="M651.600,742.300 c-1.600,1.300 -0.300,4.700 2,6.900 c2.300,2.200 5.400,3.500 6.900,1.900 l0.500,-1.400 l-2.500,-1.300 l-1.100,1.100 c-1.600,-0.500 -3.300,-2.200 -3.800,-3.800 l1.100,-1.100 l-1.400,-2.500 z" fill="#fff"/>
<circle cx="668.500" cy="755.100" r="8.200" fill="#262626" stroke="#a0a0a0" stroke-width="1.100"/>
<!-- chrome -->
<g transform="translate(704.700,747.800)">
<circle r="12" fill="#fff"/>
<path d="M0,-12 A12,12 0 0 1 10.390,-6 L0,-6 A6,6 0 0 0 -5.200,-3 L-10.390,-6 A12,12 0 0 1 0,-12 Z" fill="#ea4335"/>
<path d="M10.390,-6 A12,12 0 0 1 0,12 L5.200,3 A6,6 0 0 0 5.200,-3 L0,-6 Z" fill="#fbbc04"/>
<path d="M0,12 A12,12 0 0 1 -10.390,-6 L-5.200,3 A6,6 0 0 0 5.200,3 Z" fill="#34a853"/>
<circle r="4.900" fill="#4285f4" stroke="#fff" stroke-width="1.400"/>
</g>
<defs><clipPath id="avt"><circle cx="711" cy="754.600" r="7.800"/></clipPath></defs>
<g clip-path="url(#avt)"><rect x="703" y="746" width="16" height="17" fill="#2e1c24"/><ellipse cx="704.500" cy="756" rx="4.500" ry="7" fill="#c4323a"/>
<ellipse cx="711.600" cy="755.400" rx="5" ry="6.200" fill="#a87358"/>
<path d="M705.500,754 Q706,746.500 712,746.500 Q718,747 717.600,754.500 Q715.500,750 711.600,750 Q707.800,750 705.500,754 Z" fill="#17100f"/>
<path d="M707.200,757.300 Q711.600,760.500 716.200,757.300 Q715.600,762.300 711.700,762.600 Q708,762.300 707.200,757.300 Z" fill="#2c1d18"/>
<ellipse cx="711.800" cy="758.400" rx="1.900" ry="0.700" fill="#eadfd8"/></g>
<!-- net arrows -->
<path d="M852.900,734 v7.500" stroke="#1fe51f" stroke-width="2.100" fill="none"/><path d="M849.700,739.800 h6.400 l-3.200,3.500 z" fill="#1fe51f"/>
<path d="M852.900,761.200 v-7.500" stroke="#1fe51f" stroke-width="2.100" fill="none"/><path d="M849.700,755.500 h6.400 l-3.200,-3.500 z" fill="#1fe51f"/>
<!-- tray -->
<path d="M1099,751 l6,-6 l6,6" stroke="#fff" stroke-width="1.300" fill="none"/>
<g stroke="#fff" stroke-width="1.200" fill="none"><rect x="1124.500" y="744.500" width="7" height="7" rx="1.500"/><path d="M1131.500,747 l3,-1.800 v5.600 l-3,-1.800"/><path d="M1125,741.500 q4,-2 8,0 M1125,754.500 q4,2 8,0"/></g>
<path d="M1148,753.200 a3.300,3.300 0 0 1 0.600,-6.500 a5,5 0 0 1 9.200,-1 a3.900,3.900 0 0 1 0.400,7.500 z" fill="#e2e2e2"/><path d="M1151,748 l7,-3 l2.500,3.500 z" fill="#bdbdbd"/>
<g stroke="#fff" stroke-width="1.300" fill="none"><path d="M1175.500,754.500 a8,8 0 0 1 8,-8"/><path d="M1178.800,754.500 a4.700,4.700 0 0 1 4.700,-4.700"/><path d="M1172.300,754.500 a11.200,11.200 0 0 1 11.200,-11.200"/></g><circle cx="1182.800" cy="753.600" r="1.600" fill="#fff"/>
<rect x="1194.500" y="744.500" width="13" height="7" fill="none" stroke="#fff" stroke-width="1.100"/><rect x="1208" y="746.500" width="1.500" height="3" fill="#fff"/><rect x="1196" y="746" width="5" height="4" fill="#fff"/>
<path d="M1325,740 h16.500 v12 h-12 l-4.500,4 z" fill="#fff"/><path d="M1328,743.500 h10.500 M1328,746 h10.500 M1328,748.500 h10.500" stroke="#1e1e1e" stroke-width="0.900"/>
<circle cx="1340.700" cy="755.300" r="9.300" fill="#333333" stroke="#8e8e8e" stroke-width="1.100"/>
</svg>
<span class="t" style="left:88.2px;top:736.6px;font:400 15px/21px 'Liberation Sans', sans-serif;color:#2b2b2b;letter-spacing:-0.283px;">Type here to search</span>
<span class="t" style="left:515.3px;top:747.3px;font:400 11.5px/16px 'Liberation Sans', sans-serif;color:#ffffff;letter-spacing:-0.048px;">10</span>
<span class="t" style="left:665.3px;top:747.3px;font:400 11.5px/16px 'Liberation Sans', sans-serif;color:#ffffff;letter-spacing:-0.006px;">3</span>
<span class="t" style="left:860px;top:726.9px;font:400 15px/21px 'Liberation Sans', sans-serif;color:#f2f2f2;letter-spacing:-0.609px;">0.1 KBps</span>
<span class="t" style="left:860px;top:745.1px;font:400 15px/21px 'Liberation Sans', sans-serif;color:#f2f2f2;letter-spacing:-0.609px;">1.4 KBps</span>
<span class="t" style="left:957.2px;top:737.9px;font:400 14px/20px 'Liberation Sans', sans-serif;color:#f2f2f2;letter-spacing:-0.620px;">24°C</span>
<span class="t" style="left:995.6px;top:737.9px;font:400 14px/20px 'Liberation Sans', sans-serif;color:#f2f2f2;letter-spacing:-0.135px;">Partly cloudy</span>
<span class="t" style="left:1219.7px;top:732.1px;font:400 11px/15px 'Liberation Sans', sans-serif;color:#ffffff;letter-spacing:-0.648px;">ENG</span>
<span class="t" style="left:1225.5px;top:748.5px;font:400 11.5px/16px 'Liberation Sans', sans-serif;color:#ffffff;letter-spacing:-0.250px;">IN</span>
<span class="t" style="left:1258px;top:731px;font:400 11.5px/16px 'Liberation Sans', sans-serif;color:#ffffff;letter-spacing:-0.247px;">11:17 PM</span>
<span class="t" style="left:1255.2px;top:748.3px;font:400 11.5px/16px 'Liberation Sans', sans-serif;color:#ffffff;letter-spacing:-0.030px;">7/25/2023</span>
<span class="t" style="left:1333.6px;top:747.1px;font:400 12px/17px 'Liberation Sans', sans-serif;color:#ffffff;letter-spacing:0.320px;-webkit-text-stroke:0.3px #fff;">22</span>
</div>
</body></html>
